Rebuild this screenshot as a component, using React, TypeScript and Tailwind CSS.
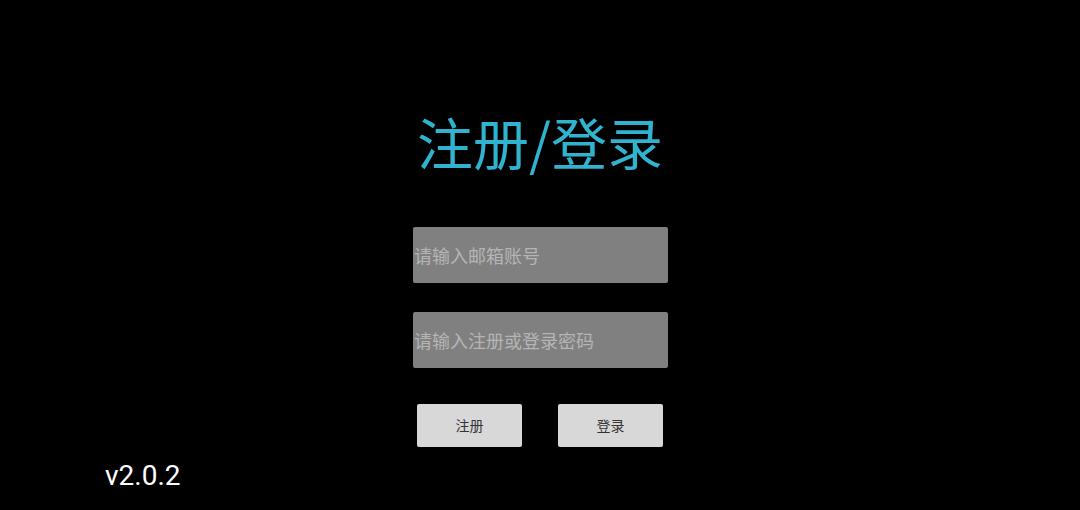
import React, { useState } from 'react';

const cjk = { fontFamily: '"Noto Sans CJK SC", "Noto Sans", sans-serif' };

export default function App() {
  const [email, setEmail] = useState('');
  const [password, setPassword] = useState('');

  return (
    <div className="w-full h-[510px] bg-black flex flex-col overflow-hidden" style={cjk}>
      <div className="flex flex-col items-center">
        <h1 className="mt-[105px] h-[72px] leading-[72px] text-[56px] text-[#2fb3cf] font-normal">
          注册/登录
        </h1>

        <div className="mt-[50px] ml-[1px] flex flex-col gap-[29px]">
          <input
            className="w-[255px] h-[56px] rounded-[2px] bg-[#808080] pl-[1px] text-[18px] text-white outline-none placeholder:text-[#b5b5b5]"
            placeholder="请输入邮箱账号"
            value={email}
            onChange={(e) => setEmail(e.target.value)}
          />
          <input
            type="password"
            className="w-[255px] h-[56px] rounded-[2px] bg-[#808080] pl-[1px] text-[18px] text-white outline-none placeholder:text-[#b5b5b5]"
            placeholder="请输入注册或登录密码"
            value={password}
            onChange={(e) => setPassword(e.target.value)}
          />
        </div>

        <div className="mt-[36px] flex gap-[36px]">
          <button className="w-[105px] h-[43px] rounded-[2px] bg-[#d8d8d8] text-[14px] text-[#333]">注册</button>
          <button className="w-[105px] h-[43px] rounded-[2px] bg-[#d8d8d8] text-[14px] text-[#333]">登录</button>
        </div>
      </div>

      <div
        className="mt-[13px] pl-[105px] text-[28px] leading-[32px] text-white"
        style={{ fontFamily: 'Roboto, "Liberation Sans", sans-serif' }}
      >
        v2.0.2
      </div>
    </div>
  );
}
